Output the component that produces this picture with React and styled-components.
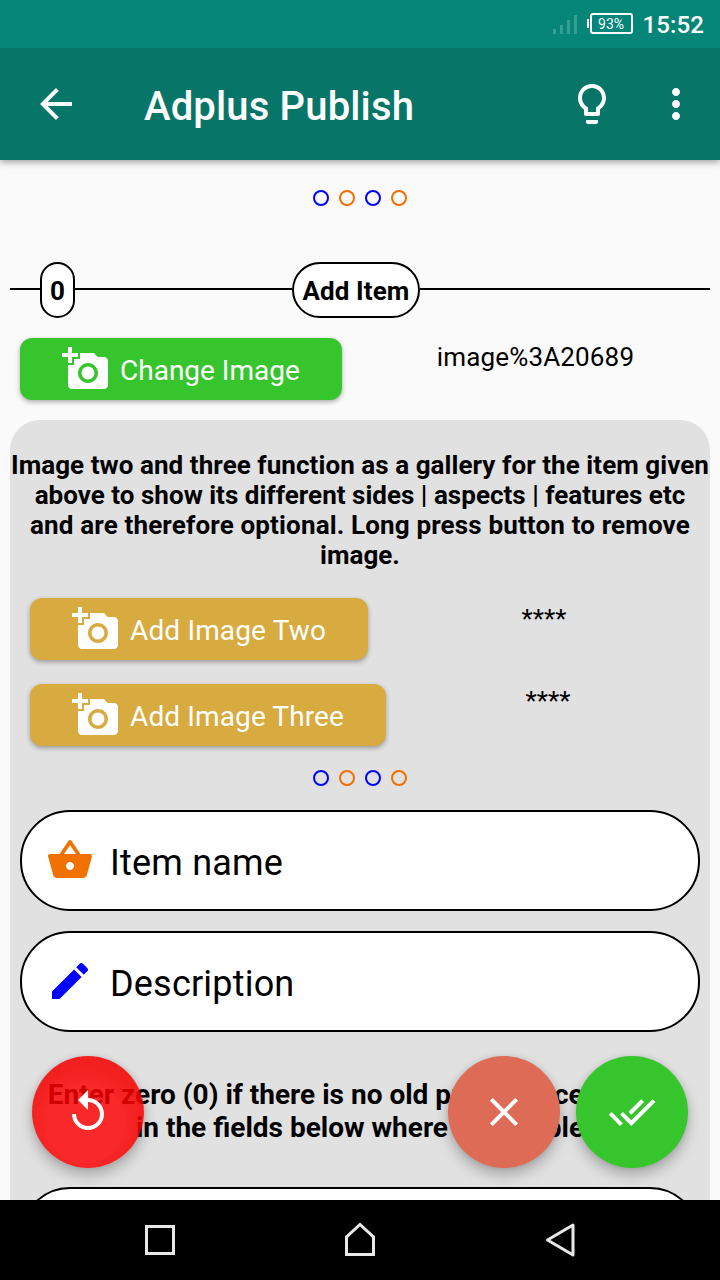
import React from "react";
import styled, { createGlobalStyle } from "styled-components";

const GlobalStyle = createGlobalStyle`
  *, *::before, *::after { box-sizing: border-box; }
  body { margin: 0; background: #fafafa; }
`;

const Screen = styled.div`
  position: relative;
  display: flex;
  flex-direction: column;
  width: 720px;
  height: 1280px;
  overflow: hidden;
  background: #fafafa;
  color: #000;
  font-family: Roboto, "Liberation Sans", sans-serif;
`;

const StatusBar = styled.div`
  display: flex;
  align-items: center;
  justify-content: flex-end;
  flex: none;
  height: 48px;
  padding-right: 16px;
  background: #058678;
  color: #fff;
`;

const Signal = styled.svg`
  width: 24px;
  height: 20px;
  fill: #379e93;
`;

const Battery = styled.div`
  display: flex;
  align-items: center;
  margin: 0 10px 1px;
  &::before {
    content: "";
    width: 2px;
    height: 9px;
    background: #fff;
  }
`;

const BatteryBody = styled.div`
  width: 43px;
  height: 21px;
  margin-left: 1px;
  border: 2px solid #fff;
  border-radius: 3px;
  font-size: 14px;
  line-height: 18px;
  text-align: center;
`;

const Clock = styled.div`
  font-size: 24px;
  font-weight: 500;
  line-height: 28px;
  letter-spacing: 0.1px;
  padding-top: 1px;
`;

const AppBar = styled.header`
  position: relative;
  display: flex;
  align-items: center;
  flex: none;
  height: 112px;
  padding: 0 20px 0 32px;
  background: #087569;
  color: #fff;
  box-shadow: 0 2px 7px rgba(0, 0, 0, 0.38);
  clip-path: inset(0 0 -16px 0);
  z-index: 1;
`;

const Title = styled.h1`
  flex: 1;
  margin: 0;
  padding: 6px 0 0 64px;
  font-size: 40px;
  font-weight: 500;
  line-height: 48px;
  letter-spacing: 0.15px;
`;

const AppBarActions = styled.div`
  display: flex;
  gap: 36px;
`;

const Content = styled.main`
  flex: 1;
  min-height: 0;
  padding: 30px 10px 0;
  overflow: hidden;
`;

const Dots = styled.div`
  display: flex;
  justify-content: center;
  gap: 10px;
`;

const Dot = styled.span`
  width: 16px;
  height: 16px;
  border: 2px solid ${(p) => p.$color};
  border-radius: 50%;
`;

const Divider = styled.div`
  display: flex;
  align-items: center;
  height: 56px;
  margin: 56px 0 20px;
`;

const Rule = styled.span`
  flex: ${(p) => (p.$width ? "none" : 1)};
  width: ${(p) => (p.$width ? p.$width + "px" : "auto")};
  height: 2px;
  margin-bottom: 2px;
  background: #000;
`;

const Pill = styled.div`
  flex: none;
  width: ${(p) => p.$width}px;
  height: 56px;
  padding-top: 2px;
  border: 2px solid #000;
  border-radius: 28px;
  background: #fff;
  font-size: 26px;
  font-weight: 700;
  line-height: 50px;
  letter-spacing: 0.1px;
  text-align: center;
  white-space: nowrap;
`;

const ImageRow = styled.div`
  display: flex;
  padding-left: ${(p) => p.$inset}px;
  margin-bottom: ${(p) => p.$after}px;
`;

const ImageButton = styled.button`
  display: flex;
  align-items: center;
  flex: none;
  width: ${(p) => p.$width}px;
  height: 62px;
  padding: 0 0 0 42px;
  gap: 10px;
  border: 0;
  border-radius: 12px;
  background: ${(p) => p.$color};
  color: #fff;
  font: 400 28px/34px Roboto, sans-serif;
  letter-spacing: ${(p) => p.$tracking || 0}px;
  white-space: nowrap;
  box-shadow: 0 2px 5px rgba(0, 0, 0, 0.32);
  span { padding-top: 3px; }
`;

const FileName = styled.div`
  flex: 1;
  padding-top: ${(p) => p.$top}px;
  margin-right: ${(p) => p.$shift}px;
  font-size: 26px;
  line-height: 30px;
  letter-spacing: ${(p) => p.$tracking || 0}px;
  text-align: center;
`;

const Panel = styled.section`
  height: 900px;
  padding-top: 30px;
  border-radius: 30px 30px 0 0;
  background: #e1e1e1;
`;

const Note = styled.p`
  margin: 0 0 28px;
  font-size: 26px;
  font-weight: 700;
  line-height: 30px;
  text-align: center;
  white-space: nowrap;
`;

const PriceNote = styled(Note)`
  margin: 46px 0 43px;
  font-size: 28px;
  line-height: 33px;
`;

const Line = styled.span`
  display: block;
  letter-spacing: ${(p) => p.$tracking || 0}px;
`;

const Fields = styled.div`
  padding-top: 24px;
`;

const Field = styled.div`
  display: flex;
  align-items: center;
  height: 101px;
  margin: 0 10px 20px;
  padding: 0 24px;
  gap: 16px;
  border: 2px solid #000;
  border-radius: 50px;
  background: #fff;
  font-size: 36px;
  line-height: 42px;
  letter-spacing: 0.2px;
  span { padding-top: 4px; }
  svg { margin-bottom: 2px; }
`;

const Fab = styled.button`
  position: absolute;
  left: ${(p) => p.$left}px;
  top: 1056px;
  display: flex;
  align-items: center;
  justify-content: center;
  width: 112px;
  height: 112px;
  padding: 0;
  border: 0;
  border-radius: 50%;
  background: ${(p) => p.$color};
  color: #fff;
  box-shadow: 0 7px 14px rgba(0, 0, 0, 0.26), 0 0 5px rgba(0, 0, 0, 0.1);
`;

const ResetFab = styled(Fab)`
  background: radial-gradient(circle at 53px 67px, rgba(255, 0, 0, 0.82) 40px, rgba(252, 0, 0, 0.83) 41px, rgba(246, 0, 0, 0.86) 56px);
`;

const NavBar = styled.nav`
  position: relative;
  display: flex;
  align-items: center;
  justify-content: center;
  gap: 152px;
  flex: none;
  height: 80px;
  background: #000;
  z-index: 2;
`;

const Glyph = styled.svg`
  display: block;
  flex: none;
  width: 48px;
  height: 48px;
  fill: ${(p) => p.$color || "#fff"};
`;

const NavGlyph = styled(Glyph)`
  fill: none;
  stroke: #e8e8e8;
  stroke-width: 3;
`;

const Icon = ({ d, color }) => (
  <Glyph viewBox="0 0 24 24" $color={color}>
    <path d={d} />
  </Glyph>
);

const icons = {
  back: "M20 11H7.83l5.59-5.59L12 4l-8 8 8 8 1.41-1.41L7.83 13H20v-2z",
  bulb: "M9 21c0 .5.4 1 1 1h4c.6 0 1-.5 1-1v-1H9v1zm3-19C8.1 2 5 5.1 5 9c0 2.4 1.2 4.5 3 5.7V17c0 .5.4 1 1 1h6c.6 0 1-.5 1-1v-2.3c1.8-1.3 3-3.4 3-5.7 0-3.9-3.1-7-7-7zm2.9 11.1l-.9.6V16h-4v-2.3l-.9-.6C7.8 12.2 7 10.6 7 9c0-2.8 2.2-5 5-5s5 2.2 5 5c0 1.6-.8 3.2-2.1 4.1z",
  more: "M12 8c1.1 0 2-.9 2-2s-.9-2-2-2-2 .9-2 2 .9 2 2 2zm0 2c-1.1 0-2 .9-2 2s.9 2 2 2 2-.9 2-2-.9-2-2-2zm0 6c-1.1 0-2 .9-2 2s.9 2 2 2 2-.9 2-2-.9-2-2-2z",
  camera: "M3 4V1h2v3h3v2H5v3H3V6H0V4h3zm3 6V7h3V4h7l1.83 2H21c1.1 0 2 .9 2 2v12c0 1.1-.9 2-2 2H5c-1.1 0-2-.9-2-2V10h3zm7 9c2.76 0 5-2.24 5-5s-2.24-5-5-5-5 2.24-5 5 2.24 5 5 5zm-3.2-5c0 1.77 1.43 3.2 3.2 3.2s3.2-1.43 3.2-3.2-1.43-3.2-3.2-3.2-3.2 1.43-3.2 3.2z",
  basket: "M17.21 9l-4.38-6.56c-.19-.28-.51-.42-.83-.42-.32 0-.64.14-.83.43L6.79 9H2c-.55 0-1 .45-1 1 0 .09.01.18.04.27l2.54 9.27c.23.84 1 1.46 1.92 1.46h13c.92 0 1.69-.62 1.93-1.46l2.54-9.27L23 10c0-.55-.45-1-1-1h-4.79zM9 9l3-4.4L15 9H9zm3 8c-1.1 0-2-.9-2-2s.9-2 2-2 2 .9 2 2-.9 2-2 2z",
  pencil: "M3 17.25V21h3.75L17.81 9.94l-3.75-3.75L3 17.25zM20.71 7.04c.39-.39.39-1.02 0-1.41l-2.34-2.34c-.39-.39-1.02-.39-1.41 0l-1.83 1.83 3.75 3.75 1.83-1.83z",
  replay: "M12 5V1L7 6l5 5V7c3.31 0 6 2.69 6 6s-2.69 6-6 6-6-2.69-6-6H4c0 4.42 3.58 8 8 8s8-3.58 8-8-3.58-8-8-8z",
  clear: "M19 6.41L17.59 5 12 10.59 6.41 5 5 6.41 10.59 12 5 17.59 6.41 19 12 13.41 17.59 19 19 17.59 13.41 12z",
  doneAll: "M18 7l-1.41-1.41-6.34 6.34 1.41 1.41L18 7zm4.24-1.41L11.66 16.17 7.48 12l-1.41 1.41L11.66 19l12-12-1.42-1.41zM.41 13.41L6 19l1.41-1.41L1.83 12 .41 13.41z",
};

const DotRow = () => (
  <Dots>
    {["#0000ff", "#f07000", "#0000ff", "#f07000"].map((color, i) => (
      <Dot key={i} $color={color} />
    ))}
  </Dots>
);

export default function App() {
  return (
    <Screen>
      <GlobalStyle />
      <StatusBar>
        <Signal viewBox="0 0 24 20">
          <path d="M0 15h3v5H0zM7 11h3v9H7zM14 6h3v14h-3zM21 1h3v19h-3z" />
        </Signal>
        <Battery>
          <BatteryBody>93%</BatteryBody>
        </Battery>
        <Clock>15:52</Clock>
      </StatusBar>
      <AppBar>
        <Icon d={icons.back} />
        <Title>Adplus Publish</Title>
        <AppBarActions>
          <Icon d={icons.bulb} />
          <Icon d={icons.more} />
        </AppBarActions>
      </AppBar>
      <Content>
        <DotRow />
        <Divider>
          <Rule $width={30} />
          <Pill $width={35}>0</Pill>
          <Rule $width={217} />
          <Pill $width={128}>Add Item</Pill>
          <Rule />
        </Divider>
        <ImageRow $inset={10} $after={20}>
          <ImageButton $width={322} $color="#37c52e">
            <Icon d={icons.camera} />
            <span>Change Image</span>
          </ImageButton>
          <FileName $top={4} $shift={-19} $tracking={0.15}>image%3A20689</FileName>
        </ImageRow>
        <Panel>
          <Note>
            <Line $tracking={0.06}>Image two and three function as a gallery for the item given</Line>
            <Line $tracking={0.02}>above to show its different sides | aspects | features etc</Line>
            <Line $tracking={0.15}>and are therefore optional. Long press button to remove</Line>
            <Line>image.</Line>
          </Note>
          <ImageRow $inset={20} $after={24}>
            <ImageButton $width={338} $color="#d7ab40" $tracking={0.15}>
              <Icon d={icons.camera} />
              <span>Add Image Two</span>
            </ImageButton>
            <FileName $top={6} $shift={-10}>****</FileName>
          </ImageRow>
          <ImageRow $inset={20} $after={24}>
            <ImageButton $width={356} $color="#d7ab40" $tracking={0.12}>
              <Icon d={icons.camera} />
              <span>Add Image Three</span>
            </ImageButton>
            <FileName $top={2} $shift={0}>****</FileName>
          </ImageRow>
          <DotRow />
          <Fields>
            <Field>
              <Icon d={icons.basket} color="#f07000" />
              <span>Item name</span>
            </Field>
            <Field>
              <Icon d={icons.pencil} color="#0000ff" />
              <span>Description</span>
            </Field>
            <PriceNote>
              <Line>Enter zero (0) if there is no old price. Place values</Line>
              <Line>in the fields below where applicable</Line>
            </PriceNote>
            <Field />
          </Fields>
        </Panel>
      </Content>
      <ResetFab $left={32}>
        <Icon d={icons.replay} />
      </ResetFab>
      <Fab $left={448} $color="#de6b56">
        <Icon d={icons.clear} />
      </Fab>
      <Fab $left={576} $color="#37c52e">
        <Icon d={icons.doneAll} />
      </Fab>
      <NavBar>
        <NavGlyph viewBox="0 0 48 48">
          <path d="M10.5 10.5h27v27h-27z" />
        </NavGlyph>
        <NavGlyph viewBox="0 0 48 48">
          <path d="M10.5 38.500v-17.500l13.500-12.500 13.500 12.500v17.500z" />
        </NavGlyph>
        <NavGlyph viewBox="0 0 48 48">
          <path d="M37 9v30L11.500 24z" strokeLinejoin="round" />
        </NavGlyph>
      </NavBar>
    </Screen>
  );
}
